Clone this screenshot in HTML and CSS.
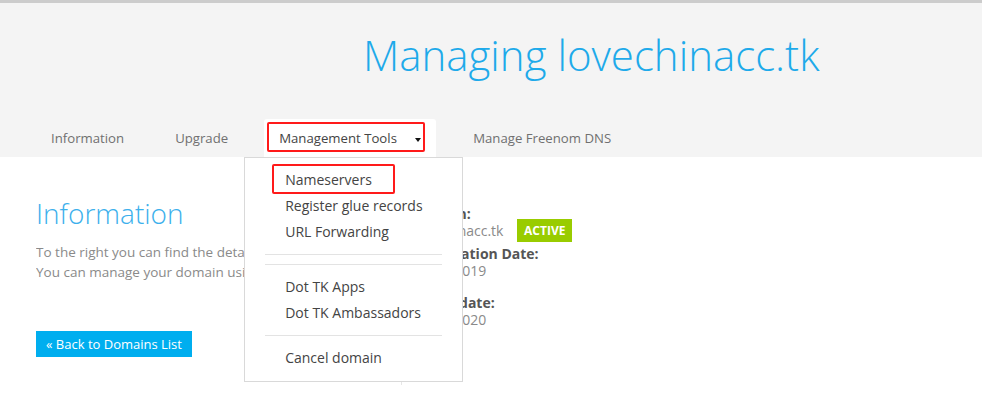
FILE: index.html
```html
<!DOCTYPE html>
<html lang="en">
<head>
<meta charset="utf-8">
<title>Managing lovechinacc.tk</title>
<link rel="stylesheet" href="styles.css">
</head>
<body>
<div class="topbar"></div>
<header class="header">
  <h1 class="title">Managing lovechinacc.tk</h1>
  <ul class="tabs">
    <li class="tab"><a href="#">Information</a></li>
    <li class="tab"><a href="#">Upgrade</a></li>
    <li class="tab tab-open">
      <a href="#">Management Tools<span class="caret"></span></a>
      <span class="mark mark-tab"></span>
      <div class="dropdown">
        <ul class="menu">
          <li class="menu-item"><a href="#">Nameservers</a><span class="mark mark-item"></span></li>
          <li class="menu-item"><a href="#">Register glue records</a></li>
          <li class="menu-item"><a href="#">URL Forwarding</a></li>
          <li class="divider"></li>
          <li class="divider"></li>
          <li class="menu-item"><a href="#">Dot TK Apps</a></li>
          <li class="menu-item"><a href="#">Dot TK Ambassadors</a></li>
          <li class="divider"></li>
          <li class="menu-item"><a href="#">Cancel domain</a></li>
        </ul>
      </div>
    </li>
    <li class="tab tab-last"><a href="#">Manage Freenom DNS</a></li>
  </ul>
</header>
<main class="content">
  <section class="left">
    <h2 class="section-title">Information</h2>
    <p class="intro">To the right you can find the details of your domain.<br>You can manage your domain using the tools above.</p>
    <a class="btn" href="#">&laquo; Back to Domains List</a>
  </section>
  <section class="right">
    <div class="field">
      <div class="label">Domain:</div>
      <div class="value">lovechinacc.tk <span class="badge">ACTIVE</span></div>
    </div>
    <div class="field field-gap">
      <div class="label">Registration Date:</div>
      <div class="value">06/07/2019</div>
    </div>
    <div class="field field-gap2">
      <div class="label">Expiry date:</div>
      <div class="value">06/07/2020</div>
    </div>
  </section>
</main>
</body>
</html>
```

FILE: styles.css
```css
* { box-sizing: border-box; }
html, body { margin: 0; padding: 0; }
body {
  background: #fff;
  font-family: "Open Sans", "Liberation Sans", sans-serif;
  font-size: 14px;
  color: #555;
  width: 982px;
  height: 420px;
  overflow: hidden;
}
a { text-decoration: none; }
ul { list-style: none; margin: 0; padding: 0; }

.topbar { height: 3px; background: #cccccc; }

.header {
  background: #f4f4f4;
  height: 154px;
  display: flex;
  flex-direction: column;
  justify-content: space-between;
}
.title {
  margin: 0;
  padding: 22px 0 0 363px;
  font-weight: 300;
  font-size: 42px;
  line-height: 60px;
  color: #1eaaea;
  white-space: nowrap;
}
.tabs {
  display: flex;
  padding-left: 36px;
  gap: 21px;
}
.tab {
  position: relative;
  height: 38px;
  padding: 0 15px;
  display: flex;
  align-items: center;
  border-radius: 3px 3px 0 0;
  white-space: nowrap;
}
.tab-last { margin-left: 1px; }
.tab a {
  color: #707070;
  font-size: 13.2px;
  display: flex;
  align-items: center;
}
.tab-open { background: #fff; width: 172px; }
.tab-open a { color: #444; }
.caret {
  display: inline-block;
  margin-left: 18px;
  margin-top: 3px;
  border-left: 3px solid transparent;
  border-right: 3px solid transparent;
  border-top: 4px solid #111;
}
.mark {
  position: absolute;
  border: 2px solid #ff1a1a;
  border-radius: 2px;
  pointer-events: none;
}
.mark-tab { left: 3px; top: 3px; width: 158px; height: 30px; }

.dropdown {
  position: absolute;
  left: -20px;
  top: 38px;
  width: 219px;
  background: #fff;
  border: 1px solid #d9d9d9;
  padding: 9px 0 10px;
  z-index: 5;
}
.menu-item { position: relative; }
.menu-item a {
  display: block;
  padding-left: 40px;
  line-height: 26px;
  font-size: 14px;
  color: #444;
  white-space: nowrap;
}
.mark-item { left: 27px; top: -3px; width: 123px; height: 30px; }
.divider {
  height: 1px;
  background: #e3e3e3;
  margin: 9px 20px;
}
.divider + .divider { margin-top: 0; }

.content {
  display: grid;
  grid-template-columns: 365px 1fr;
  padding-left: 36px;
}
.left { padding-top: 36px; }
.section-title {
  margin: 0;
  font-weight: 300;
  font-size: 28px;
  line-height: 40px;
  color: #3cb0ec;
}
.intro {
  margin: 9px 0 0;
  font-size: 13.5px;
  line-height: 20px;
  color: #8a8a8a;
  width: 355px;
  height: 40px;
  overflow: hidden;
  white-space: nowrap;
}
.btn {
  display: inline-block;
  margin-top: 49px;
  background: #00aeef;
  color: #fff;
  font-size: 13px;
  line-height: 26px;
  padding: 0 10px;
}
.right {
  border-left: 1px solid #e6e6e6;
  padding: 48px 0 0 10px;
  height: 228px;
}
.label { font-weight: 700; color: #555; line-height: 17px; }
.value { color: #8a8a8a; line-height: 17px; }
.field-gap { margin-top: 3px; }
.field-gap2 { margin-top: 15px; }
.badge {
  display: inline-block;
  vertical-align: middle;
  margin-left: 10px;
  margin-top: -3px;
  background: #99cc00;
  color: #fff;
  font-weight: 700;
  font-size: 12px;
  line-height: 23px;
  padding: 0 7px;
}
```
